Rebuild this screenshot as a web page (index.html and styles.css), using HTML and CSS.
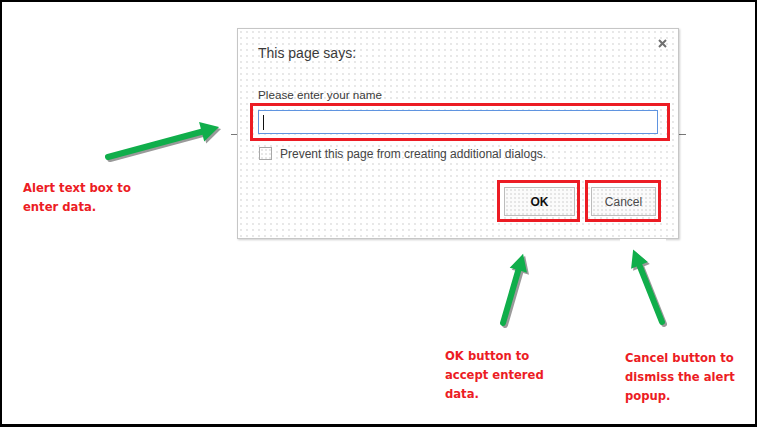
FILE: index.html
```html
<!DOCTYPE html>
<html>
<head>
<meta charset="utf-8">
<link rel="stylesheet" href="styles.css">
</head>
<body>
<div class="frame">
  <div class="backline"></div>
  <div class="dialog">
    <div class="title-row">
      <span class="title">This page says:</span>
      <svg class="close" width="9" height="9" viewBox="0 0 9 9"><path d="M1 1L8 8M8 1L1 8" stroke="#6f6f6f" stroke-width="2"/></svg>
    </div>
    <div class="prompt">Please enter your name</div>
    <div class="hl field-hl">
      <div class="input"><span class="caret"></span></div>
    </div>
    <div class="check-row">
      <span class="checkbox"></span>
      <span class="check-label">Prevent this page from creating additional dialogs.</span>
    </div>
    <div class="btn-row">
      <div class="hl ok-hl"><div class="btn ok">OK</div></div>
      <div class="hl cancel-hl"><div class="btn cancel">Cancel</div></div>
    </div>
  </div>

  <div class="note note-alert">Alert text box to<br>enter data.</div>
  <div class="note note-ok">OK button to<br>accept entered<br>data.</div>
  <div class="note note-cancel">Cancel button to<br>dismiss the alert<br>popup.</div>

  <svg class="arrows" width="757" height="427" viewBox="0 0 757 427">
    <rect x="620" y="239" width="46" height="6" fill="#fff"/>
    <g fill="#9a9a9a">
      <path transform="translate(110,159) rotate(-15.1)" d="M0,-3 H97 V-10 L115,0 L97,10 V3 H0 A3,3 0 0 1 0,-3 Z"/>
      <path transform="translate(505,325) rotate(-73.8)" d="M0,-3 H55 V-9 L72,0 L55,9 V3 H0 A3,3 0 0 1 0,-3 Z"/>
      <path transform="translate(664,324) rotate(-111.7)" d="M0,-3 H61 V-9 L78,0 L61,9 V3 H0 A3,3 0 0 1 0,-3 Z"/>
    </g>
    <g fill="#10ae4b">
      <path transform="translate(108,157) rotate(-15.1)" d="M0,-3 H97 V-10 L115,0 L97,10 V3 H0 A3,3 0 0 1 0,-3 Z"/>
      <path transform="translate(503,323) rotate(-73.8)" d="M0,-3 H55 V-9 L72,0 L55,9 V3 H0 A3,3 0 0 1 0,-3 Z"/>
      <path transform="translate(662,322) rotate(-111.7)" d="M0,-3 H61 V-9 L78,0 L61,9 V3 H0 A3,3 0 0 1 0,-3 Z"/>
    </g>
  </svg>
</div>
</body>
</html>
```

FILE: styles.css
```css
html, body {
  margin: 0;
  padding: 0;
  background: #fff;
}

.frame {
  position: relative;
  width: 757px;
  height: 427px;
  box-sizing: border-box;
  border: 2px solid #000;
  border-bottom-width: 3px;
  background: #fff;
  overflow: hidden;
  font-family: "Liberation Sans", Arial, sans-serif;
  padding-top: 26px;
  padding-left: 235px;
}

.backline {
  position: absolute;
  left: 229px;
  top: 132px;
  width: 455px;
  height: 1px;
  background: #777;
}

.dialog {
  position: relative;
  z-index: 1;
  height: 209px;
  width: 420px;
  border: 1px solid #c6c6c6;
  box-shadow: 1px 1px 2px rgba(0, 0, 0, 0.2);
  background-color: #fff;
  background-image: radial-gradient(circle, #cfcfcf 0.5px, transparent 0.9px);
  background-size: 6px 6px;
  display: flex;
  flex-direction: column;
  padding-left: 12px;
  padding-right: 8px;
}

.title-row {
  display: flex;
  align-items: flex-start;
  margin-top: 14px;
  margin-left: 8px;
  height: 20px;
}

.title {
  font-size: 14px;
  line-height: 20px;
  color: #3a3a3a;
}

.close {
  margin-left: auto;
  margin-top: -4px;
  margin-right: 3px;
}

.prompt {
  margin-top: 25px;
  margin-left: 8px;
  font-size: 11.7px;
  line-height: 14px;
  color: #3a3a3a;
}

.hl {
  border: 3px solid #ec1c24;
  box-sizing: border-box;
}

.field-hl {
  margin-top: 1px;
  width: 420px;
  height: 38px;
  padding: 4px 9px 4px 5px;
}

.input {
  height: 24px;
  box-sizing: border-box;
  border: 1px solid #5f94e0;
  background: #fff;
  display: flex;
  align-items: center;
  padding-left: 4px;
}

.caret {
  width: 1px;
  height: 15px;
  background: #111;
}

.check-row {
  margin-top: 6px;
  margin-left: 9px;
  display: flex;
  align-items: center;
  gap: 8px;
  height: 13px;
}

.checkbox {
  width: 13px;
  height: 13px;
  box-sizing: border-box;
  border: 1px solid #a8a8a8;
  background-color: #fff;
  background-image: radial-gradient(circle, #cfcfcf 0.5px, transparent 0.9px);
  background-size: 4px 4px;
}

.check-label {
  font-size: 12px;
  line-height: 14px;
  color: #444;
}

.btn-row {
  margin-top: 20px;
  display: flex;
  justify-content: flex-end;
  gap: 5px;
  margin-right: 9px;
}

.ok-hl {
  padding: 4px 2px 3px 4px;
}

.cancel-hl {
  padding: 4px 2px 3px 3px;
}

.btn {
  height: 29px;
  box-sizing: border-box;
  border: 1px solid #bcbcbc;
  background-color: #fbfbfb;
  background-image: radial-gradient(circle, #cfcfcf 0.5px, transparent 0.9px);
  background-size: 4px 4px;
  display: flex;
  align-items: center;
  justify-content: center;
  font-size: 12px;
}

.ok {
  width: 71px;
  font-weight: bold;
  color: #111;
}

.cancel {
  width: 65px;
  color: #4a4a4a;
}

.note {
  position: absolute;
  font-family: "DejaVu Sans", sans-serif;
  font-weight: bold;
  font-size: 11.6px;
  line-height: 19px;
  color: #ec1c24;
  white-space: nowrap;
}

.note-alert {
  left: 21px;
  top: 177px;
}

.note-ok {
  left: 443px;
  top: 345px;
}

.note-cancel {
  left: 623px;
  top: 347px;
}

.arrows {
  position: absolute;
  left: -2px;
  top: -2px;
  z-index: 2;
  pointer-events: none;
}
```
